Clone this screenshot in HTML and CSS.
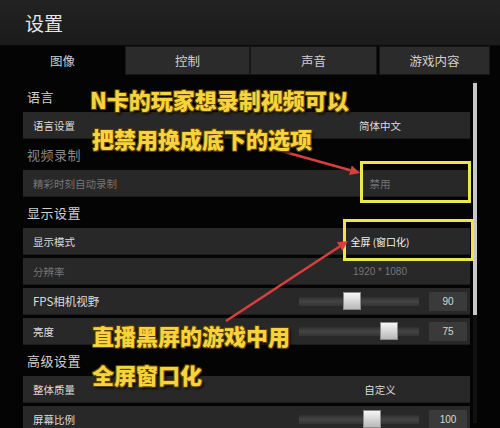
FILE: index.html
```html
<html>
  <head>
    <meta charset="utf-8">
    <link rel="stylesheet" href="styles.css">
  </head>
  <body>
    <div class="screen">
      <div class="topbar">设置</div>
      <div class="tabs">
        <div class="tab active">图像</div>
        <div class="tab">控制</div>
        <div class="tab wide">声音</div>
        <div class="tab last">游戏内容</div>
      </div>

      <div class="main">
        <div class="settings">
          <div class="heading">语言</div>
          <div class="row">
            <span class="label">语言设置</span>
            <span class="value">简体中文</span>
          </div>

          <div class="heading dim">视频录制</div>
          <div class="row dim">
            <span class="label">精彩时刻自动录制</span>
            <span class="value">禁用</span>
          </div>

          <div class="heading">显示设置</div>
          <div class="row">
            <span class="label">显示模式</span>
            <span class="value strong">全屏 (窗口化)</span>
          </div>
          <div class="row dim">
            <span class="label">分辨率</span>
            <span class="value digits">1920 * 1080</span>
          </div>
          <div class="row">
            <span class="label big">FPS相机视野</span>
            <div class="slider"><div class="thumb" style="left: 44px;"></div></div>
            <span class="num">90</span>
          </div>
          <div class="row">
            <span class="label">亮度</span>
            <div class="slider"><div class="thumb" style="left: 81px;"></div></div>
            <span class="num">75</span>
          </div>

          <div class="heading">高级设置</div>
          <div class="row">
            <span class="label">整体质量</span>
            <span class="value">自定义</span>
          </div>
          <div class="row">
            <span class="label">屏幕比例</span>
            <div class="slider"><div class="thumb" style="left: 64px;"></div></div>
            <span class="num">100</span>
          </div>
        </div>
        <div class="scroll"><div class="scrollThumb"></div></div>
      </div>

      <!-- annotations drawn over the screenshot -->
      <div class="box boxOne"></div>
      <div class="box boxTwo"></div>

      <svg class="arrows" width="500" height="428" viewBox="0 0 500 428">
        <line x1="267" y1="147" x2="350.4" y2="170.3" stroke="#d8403f" stroke-width="2.5"/>
        <polygon points="360,173 349.1,175.1 351.8,165.5" fill="#d8403f"/>
        <line x1="226" y1="321" x2="339.6" y2="246.5" stroke="#d8403f" stroke-width="2.5"/>
        <polygon points="348,241 342.4,250.7 336.9,242.3" fill="#d8403f"/>
      </svg>

      <div class="note lineOne">N卡的玩家想录制视频可以</div>
      <div class="note lineTwo">把禁用换成底下的选项</div>
      <div class="note lineThree">直播黑屏的游戏中用</div>
      <div class="note lineFour">全屏窗口化</div>
    </div>
  </body>
</html>
```

FILE: styles.css
```css
body {
  margin: 0;
  background: #000;
  font-family: "Noto Sans CJK SC", "Noto Sans", sans-serif;
}
.screen {
  position: relative;
  width: 500px;
  height: 428px;
  overflow: hidden;
  background: #040404;
}
.topbar {
  height: 45px;
  line-height: 45px;
  padding-left: 25px;
  background: linear-gradient(#222, #1b1b1b);
  color: #e6e6e6;
  font-size: 19px;
  border-bottom: 1px solid #0a0a0a;
}

/* tabs */
.tabs {
  display: flex;
  height: 29px;
}
.tab {
  width: 125px;
  display: flex;
  align-items: center;
  justify-content: center;
  box-sizing: border-box;
  font-size: 12.5px;
  color: #cfcfcf;
  background: #2b2b2b;
  border: 1px solid #161616;
}
.tab.active {
  background: #040404;
  border-color: #040404;
}
.tab.wide { width: 127px; }
.tab.last { width: 111px; margin-left: 2px; }

/* settings list */
.main {
  display: flex;
  padding-top: 6px;
}
.settings {
  margin-left: 23px;
  width: 447px;
}
.heading {
  height: 31px;
  line-height: 31px;
  padding-left: 4px;
  font-size: 13px;
  letter-spacing: 0.5px;
  color: #d0d0d0;
}
.heading.dim { color: #8a8a8a; }
.row {
  display: flex;
  align-items: center;
  height: 27px;
  background: #282828;
  border-bottom: 1px solid #1c1c1c;
  box-sizing: border-box;
  font-size: 10.5px;
  color: #dcdcdc;
}
.row + .row { margin-top: 3px; }
.row.dim { color: #767676; }
.label {
  flex: 1;
  padding-left: 10px;
}
.label.big { font-size: 11.5px; }
.value {
  width: 180px;
  text-align: center;
}
.value.strong {
  color: #f6f6f6;
  font-size: 10px;
}
.value.digits {
  font-family: "Liberation Sans", sans-serif;
  font-size: 10px;
}
.slider {
  position: relative;
  width: 120px;
  height: 9px;
  margin-right: 10px;
  background: linear-gradient(#2f2f2f, #444 50%, #333);
  border-radius: 1px;
}
.thumb {
  position: absolute;
  top: -5px;
  width: 18px;
  height: 18px;
  box-sizing: border-box;
  background: linear-gradient(#f6f6f6, #b8b8b8);
  border: 1px solid #8a8a8a;
}
.num {
  width: 38px;
  height: 19px;
  line-height: 19px;
  margin-right: 3px;
  text-align: center;
  background: #3a3a3a;
  font-family: "Liberation Sans Narrow", "Liberation Sans", sans-serif;
  font-size: 10px;
  color: #d8d8d8;
}
.scroll {
  margin-left: 3px;
  width: 4px;
  padding-top: 2px;
  height: 340px;
  background: #111;
}
.scrollThumb {
  height: 232px;
  background: #c8c8c8;
}

/* annotations */
.box {
  position: absolute;
  box-sizing: border-box;
  border: 3px solid #ebe64a;
}
.boxOne { left: 360px; top: 161px; width: 111px; height: 42px; }
.boxTwo { left: 343px; top: 219px; width: 131px; height: 42px; }
.arrows {
  position: absolute;
  left: 0;
  top: 0;
}
.note {
  position: absolute;
  font-size: 22px;
  line-height: 22px;
  font-weight: 900;
  color: #f7d33c;
  white-space: nowrap;
  text-shadow: 1px 1px 0 #5a4000, -1px -1px 0 #5a4000, 1px -1px 0 #5a4000, -1px 1px 0 #5a4000, 2px 2px 3px #000;
}
.lineOne { left: 90px; top: 88px; }
.lineTwo { left: 92px; top: 127px; }
.lineThree { left: 92px; top: 324px; }
.lineFour { left: 92px; top: 363px; }
```
